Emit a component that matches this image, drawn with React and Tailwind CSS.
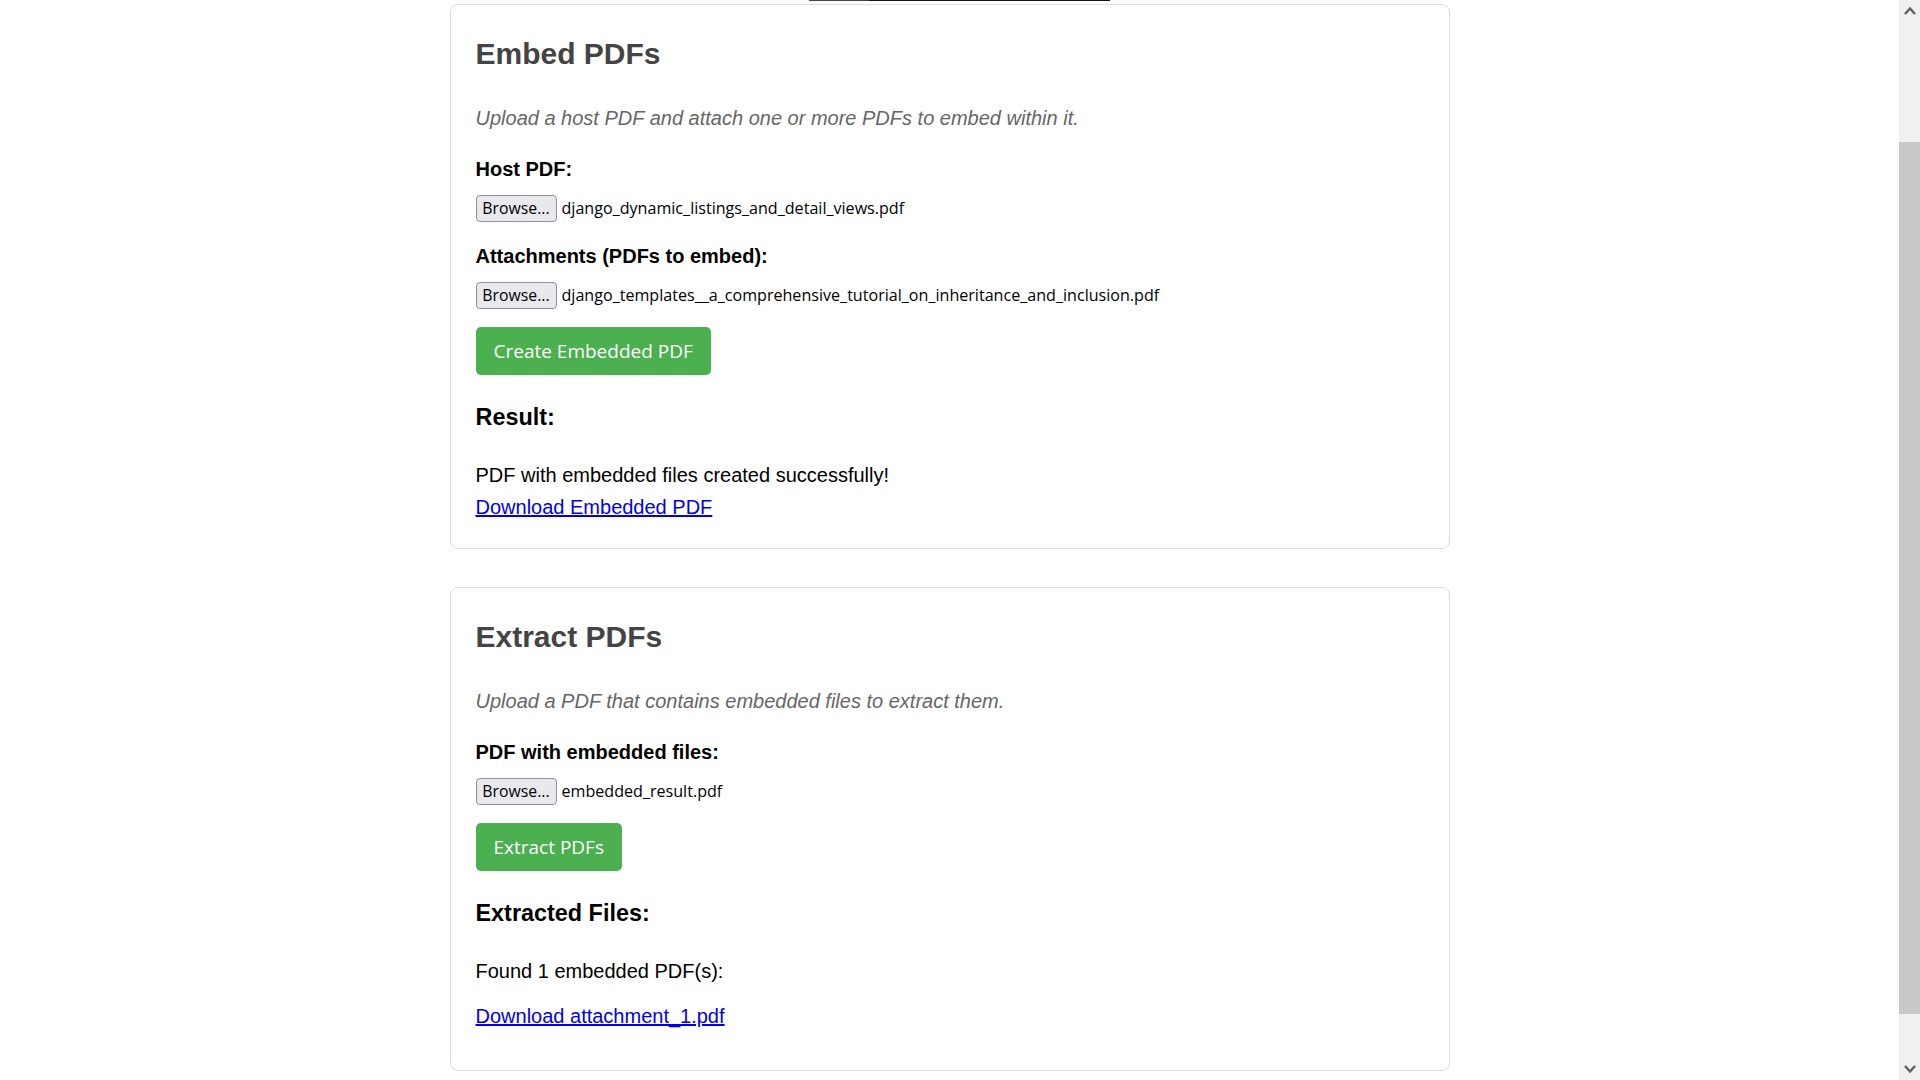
const sans = "font-['Liberation_Sans',Arial,sans-serif]";
const ui = "font-['Open_Sans','Noto_Sans',sans-serif]";

function FileField({ label, fileName }) {
  return (
    <div>
      <div className="mt-[28px] text-[20px] leading-[23px] font-bold text-black">{label}</div>
      <div className="mt-[14px] flex items-center">
        <span
          className={`${ui} flex h-[27px] w-[81px] items-center justify-center rounded-[4px] border border-[#8f8f9d] bg-[#e9e9ed] text-[15.8px] text-black`}
        >
          Browse...
        </span>
        <span className={`${ui} ml-[5px] text-[16.1px] text-black`}>{fileName}</span>
      </div>
    </div>
  );
}

function GreenButton({ children }) {
  return (
    <button
      className={`${ui} mt-[18px] flex h-[48px] items-center rounded-[5px] bg-[#4caf50] px-[18px] text-[19px] text-white`}
    >
      {children}
    </button>
  );
}

function Card({ title, description, children, bottom }) {
  return (
    <section className={`rounded-[8px] border border-[#dddddd] bg-white px-[25px] pt-[32px] ${bottom}`}>
      <h2 className="text-[30px] leading-[34px] font-bold text-[#444444]">{title}</h2>
      <p className="mt-[36px] text-[20px] leading-[23px] italic text-[#666666]">{description}</p>
      {children}
    </section>
  );
}

function ScrollArrow({ down }) {
  return (
    <div className="flex h-[21px] items-center justify-center">
      <svg width="12" height="9" viewBox="0 0 12 9" className={down ? "rotate-180" : ""}>
        <polyline points="1,8 6,2.5 11,8" fill="none" stroke="#5f5f5f" strokeWidth="2.4" />
      </svg>
    </div>
  );
}

export default function App() {
  return (
    <div className={`${sans} flex h-screen w-full overflow-hidden bg-white text-black`}>
      <main className="min-w-0 flex-1">
        <div className="mx-auto w-full max-w-[1000px]">
          <div className="flex pl-[359px]">
            <div className="h-px w-[60px] bg-[#444444]" />
            <div className="h-px w-[241px] bg-[#111111]" />
          </div>

          <div className="mt-[3px]">
            <Card
              title="Embed PDFs"
              description="Upload a host PDF and attach one or more PDFs to embed within it."
              bottom="pb-[29px]"
            >
              <FileField label="Host PDF:" fileName="django_dynamic_listings_and_detail_views.pdf" />
              <div className="-mt-[5px]">
                <FileField
                  label="Attachments (PDFs to embed):"
                  fileName="django_templates__a_comprehensive_tutorial_on_inheritance_and_inclusion.pdf"
                />
              </div>
              <GreenButton>Create Embedded PDF</GreenButton>
              <h3 className="mt-[29px] text-[23.4px] leading-[27px] font-bold">Result:</h3>
              <p className="mt-[33px] text-[20px] leading-[23px]">PDF with embedded files created successfully!</p>
              <a href="#" className="mt-[9px] block w-fit text-[20px] leading-[23px] text-[#0000ee] underline">
                Download Embedded PDF
              </a>
            </Card>
          </div>

          <div className="mt-[38px]">
            <Card
              title="Extract PDFs"
              description="Upload a PDF that contains embedded files to extract them."
              bottom="pb-[42px]"
            >
              <FileField label="PDF with embedded files:" fileName="embedded_result.pdf" />
              <GreenButton>Extract PDFs</GreenButton>
              <h3 className="mt-[29px] text-[23.4px] leading-[27px] font-bold">Extracted Files:</h3>
              <p className="mt-[33px] text-[20px] leading-[23px]">Found 1 embedded PDF(s):</p>
              <a href="#" className="mt-[22px] block w-fit text-[20px] leading-[23px] text-[#0000ee] underline">
                Download attachment_1.pdf
              </a>
            </Card>
          </div>
        </div>
      </main>

      <aside className="flex w-[21px] flex-col bg-[#f0f0f0]">
        <ScrollArrow />
        <div className="h-[121px]" />
        <div className="h-[872px] bg-[#c8c8c8]" />
        <div className="flex-1" />
        <ScrollArrow down />
      </aside>
    </div>
  );
}
